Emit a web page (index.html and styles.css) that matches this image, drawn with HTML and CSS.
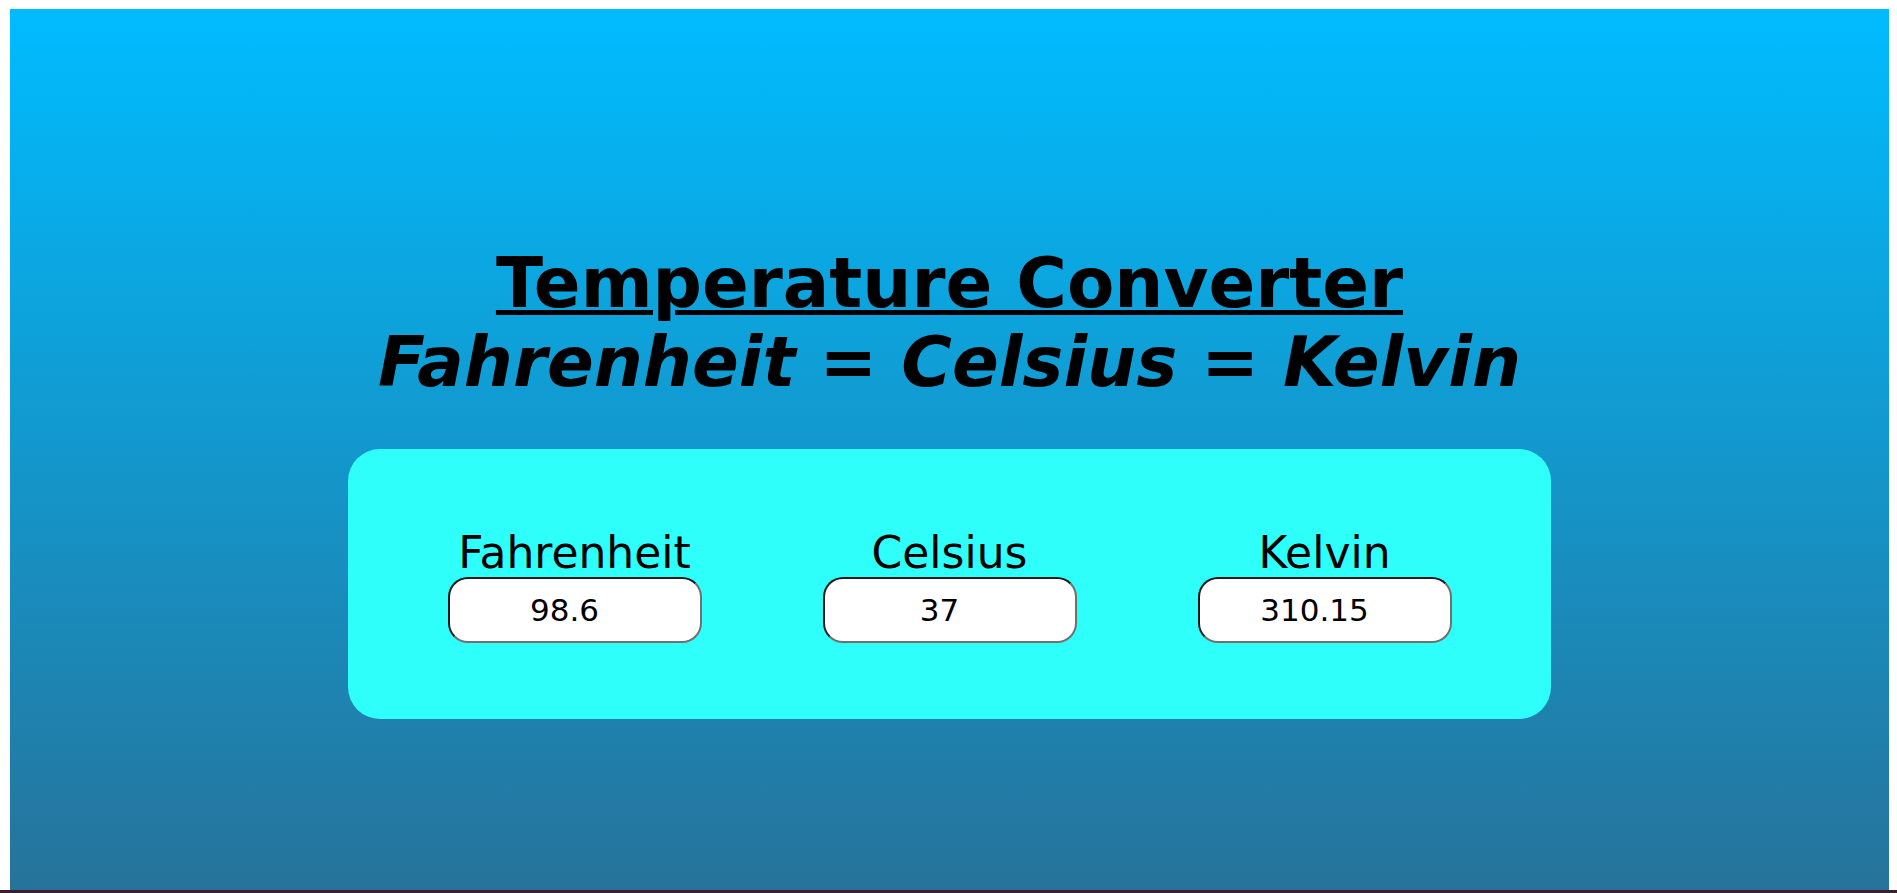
FILE: index.html
```html
<!DOCTYPE html>
<html lang="en">
<head>
<meta charset="utf-8">
<title>Temperature Converter</title>
<link rel="stylesheet" href="styles.css">
</head>
<body>
<div class="frame">
  <main class="app">
    <h1 class="title"><u>Temperature Converter</u><br><i>Fahrenheit = Celsius = Kelvin</i></h1>
    <section class="card">
      <div class="field">
        <label class="label" for="f">Fahrenheit</label>
        <input class="value" id="f" type="text" value="98.6">
      </div>
      <div class="field">
        <label class="label" for="c">Celsius</label>
        <input class="value" id="c" type="text" value="37">
      </div>
      <div class="field">
        <label class="label" for="k">Kelvin</label>
        <input class="value" id="k" type="text" value="310.15">
      </div>
    </section>
  </main>
</div>
<div class="bottom-bar"></div>
</body>
</html>
```
FILE: styles.css
```css
html, body {
  margin: 0;
  padding: 0;
  background: #ffffff;
}
body {
  font-family: "DejaVu Sans", Verdana, sans-serif;
  color: #000;
  overflow: hidden;
}
.frame {
  padding: 9px 8px 0 10px;
}
.app {
  height: 881px;
  box-sizing: border-box;
  background: linear-gradient(to bottom, #00bcff 0%, #26739a 100%);
  display: flex;
  flex-direction: column;
  align-items: center;
  padding-top: 235px;
}
.title {
  margin: 0;
  font-size: 69px;
  font-weight: bold;
  line-height: 79px;
  text-align: center;
}
.title u {
  text-decoration-thickness: 5px;
  text-underline-offset: 3px;
}
.card {
  margin-top: 47px;
  width: 1203px;
  height: 270px;
  box-sizing: border-box;
  background: #2efffa;
  border-radius: 32px;
  display: grid;
  grid-template-columns: repeat(3, 375px);
  justify-content: center;
  align-content: start;
  padding-top: 78px;
}
.field {
  display: flex;
  flex-direction: column;
  align-items: center;
}
.label {
  font-size: 44px;
  line-height: 51px;
}
.value {
  width: 254px;
  height: 66px;
  box-sizing: border-box;
  margin-top: -1px;
  border: 2px solid;
  border-color: #1a1a1a #707070 #707070 #1a1a1a;
  border-radius: 20px;
  background: #fff;
  font-family: "DejaVu Sans", Verdana, sans-serif;
  font-size: 31px;
  color: #000;
  text-align: center;
  padding: 0 21px 0 1px;
  outline: none;
}
.bottom-bar {
  height: 3px;
  background: #3c1f2a;
}
```
